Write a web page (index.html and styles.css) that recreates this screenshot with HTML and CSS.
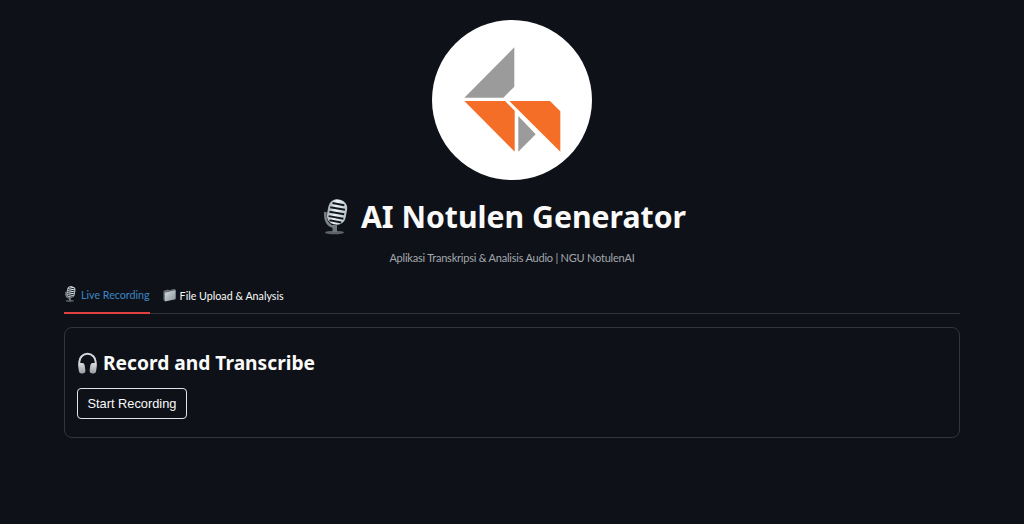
FILE: index.html
```html
<!DOCTYPE html>
<html lang="en">
<head>
<meta charset="utf-8">
<title>AI Notulen Generator</title>
<link rel="stylesheet" href="styles.css">
</head>
<body>
<svg class="defs" width="0" height="0" aria-hidden="true">
  <defs>
    <linearGradient id="micHead" x1="0" y1="0" x2="1" y2="0">
      <stop offset="0" stop-color="#a4adb4"/><stop offset="0.4" stop-color="#eef6fc"/><stop offset="1" stop-color="#b4c2cc"/>
    </linearGradient>
    <linearGradient id="folderFill" x1="0" y1="0" x2="1" y2="1">
      <stop offset="0" stop-color="#d5dbe0"/><stop offset="1" stop-color="#8a949d"/>
    </linearGradient>
    <linearGradient id="cup" x1="0" y1="0" x2="0" y2="1">
      <stop offset="0" stop-color="#dcdedf"/><stop offset="1" stop-color="#989da1"/>
    </linearGradient>
    <symbol id="mic" viewBox="0 0 24 36">
      <ellipse cx="10.500" cy="33.500" rx="9.500" ry="1.800" fill="#5e6368"/>
      <rect x="8.500" y="26" width="4.500" height="7" fill="#6e757b"/>
      <path d="M1.500 13c-1 8 2 14 9 15" fill="none" stroke="#7a8188" stroke-width="2.600"/>
      <g transform="rotate(10 13 13)">
        <rect x="3.500" y="0.500" width="19" height="25" rx="8.500" fill="url(#micHead)"/>
        <path d="M7 5h12M5.500 9.500h15M5.500 14h15M5.500 18.500h15M7 22.500h12" stroke="#15181c" stroke-width="2"/>
      </g>
    </symbol>
    <symbol id="folder" viewBox="0 0 14 14">
      <path d="M0.500 2.500l5-1.500 1 1 5.500-1.500 1.500 0.500v10l-11.500 2.500-1.500-1z" fill="#697279"/>
      <path d="M2 4.500l11.500-2.500v9.500l-11.500 2.500z" fill="url(#folderFill)"/>
    </symbol>
    <symbol id="phones" viewBox="0 0 21 22">
      <path d="M2.300 13V10a8.200 8.200 0 0 1 16.400 0V13" fill="none" stroke="#d6d8da" stroke-width="2"/>
      <rect x="1.500" y="11" width="6.500" height="10.500" rx="2.800" fill="url(#cup)" transform="rotate(-8 4.750 16)"/>
      <rect x="13" y="11" width="6.500" height="10.500" rx="2.800" fill="url(#cup)" transform="rotate(8 16.250 16)"/>
    </symbol>
  </defs>
</svg>
<main class="page">
  <header class="hero">
    <svg class="logo" viewBox="432 20 160 160" role="img" aria-label="Logo">
      <circle cx="512" cy="100" r="80" fill="#fff"/>
      <polygon points="514.300,47.300 514.300,86.700 503.300,97.700 464.300,97.700" fill="#9b9b9b"/>
      <polygon points="464.300,101 505,101 514.700,110.700 514.700,151.700" fill="#f56e28"/>
      <polygon points="509.300,101 550,101 560.300,111.300 560.300,151.700" fill="#f56e28"/>
      <polygon points="518.300,116 535.700,134.300 518.300,151.700" fill="#9b9b9b"/>
    </svg>
    <h1 class="title"><svg class="title-icon"><use href="#mic"/></svg>AI Notulen Generator</h1>
    <p class="subtitle">Aplikasi Transkripsi &amp; Analisis Audio | NGU NotulenAI</p>
  </header>
  <nav class="tabs">
    <div class="tab tab-active"><svg class="tab-icon"><use href="#mic"/></svg>Live Recording</div>
    <div class="tab"><svg class="tab-icon"><use href="#folder"/></svg>File Upload &amp; Analysis</div>
  </nav>
  <section class="card">
    <h2 class="card-title"><svg class="card-icon"><use href="#phones"/></svg>Record and Transcribe</h2>
    <button class="btn" type="button">Start Recording</button>
  </section>
</main>
</body>
</html>
```
FILE: styles.css
```css
* { box-sizing: border-box; }
html, body { margin: 0; height: 100%; }
body {
  background: #0e1117;
  color: #fafafa;
  font-family: "Noto Sans", "Open Sans", sans-serif;
  overflow: hidden;
}
.defs { position: absolute; }
.page { padding: 20px 64px 0; }
.hero { display: flex; flex-direction: column; align-items: center; }
.logo { width: 160px; height: 160px; display: block; }
.title {
  margin: 17px 0 0;
  padding-right: 14px;
  display: flex;
  align-items: center;
  gap: 13px;
  font-size: 30.200px;
  line-height: 40px;
  font-weight: 700;
}
.title-icon { width: 24px; height: 36px; }
.subtitle {
  margin: 12px 0 0;
  font-family: Lato, "Noto Sans", sans-serif;
  font-size: 11px;
  letter-spacing: -0.220px;
  line-height: 18px;
  color: #a3a8b0;
}
.tabs {
  margin-top: 11px;
  display: flex;
  gap: 13px;
  height: 36px;
  border-bottom: 1px solid #31333f;
}
.tab {
  display: flex;
  align-items: center;
  gap: 4px;
  height: 36px;
  padding-bottom: 2px;
  font-family: Lato, "Noto Sans", sans-serif;
  font-size: 10.700px;
  color: #fafafa;
}
.tab-active {
  color: #3d87c4;
  border-bottom: 2px solid #e0403f;
}
.tab-icon { width: 13px; height: 16px; }
.card {
  margin-top: 13px;
  height: 111px;
  padding: 21px 12px 0;
  border: 1px solid #33363e;
  border-radius: 8px;
}
.card-title {
  margin: 0;
  display: flex;
  align-items: center;
  gap: 5px;
  font-size: 19.200px;
  line-height: 28px;
  font-weight: 700;
}
.card-icon { width: 21px; height: 22px; }
.btn {
  margin-top: 11px;
  display: block;
  width: 110px;
  height: 31px;
  padding: 0;
  background: #0e1117;
  color: #fafafa;
  border: 1px solid #e3e4e6;
  border-radius: 4px;
  font-family: "Liberation Sans", Arial, sans-serif;
  font-size: 12.800px;
}
```
